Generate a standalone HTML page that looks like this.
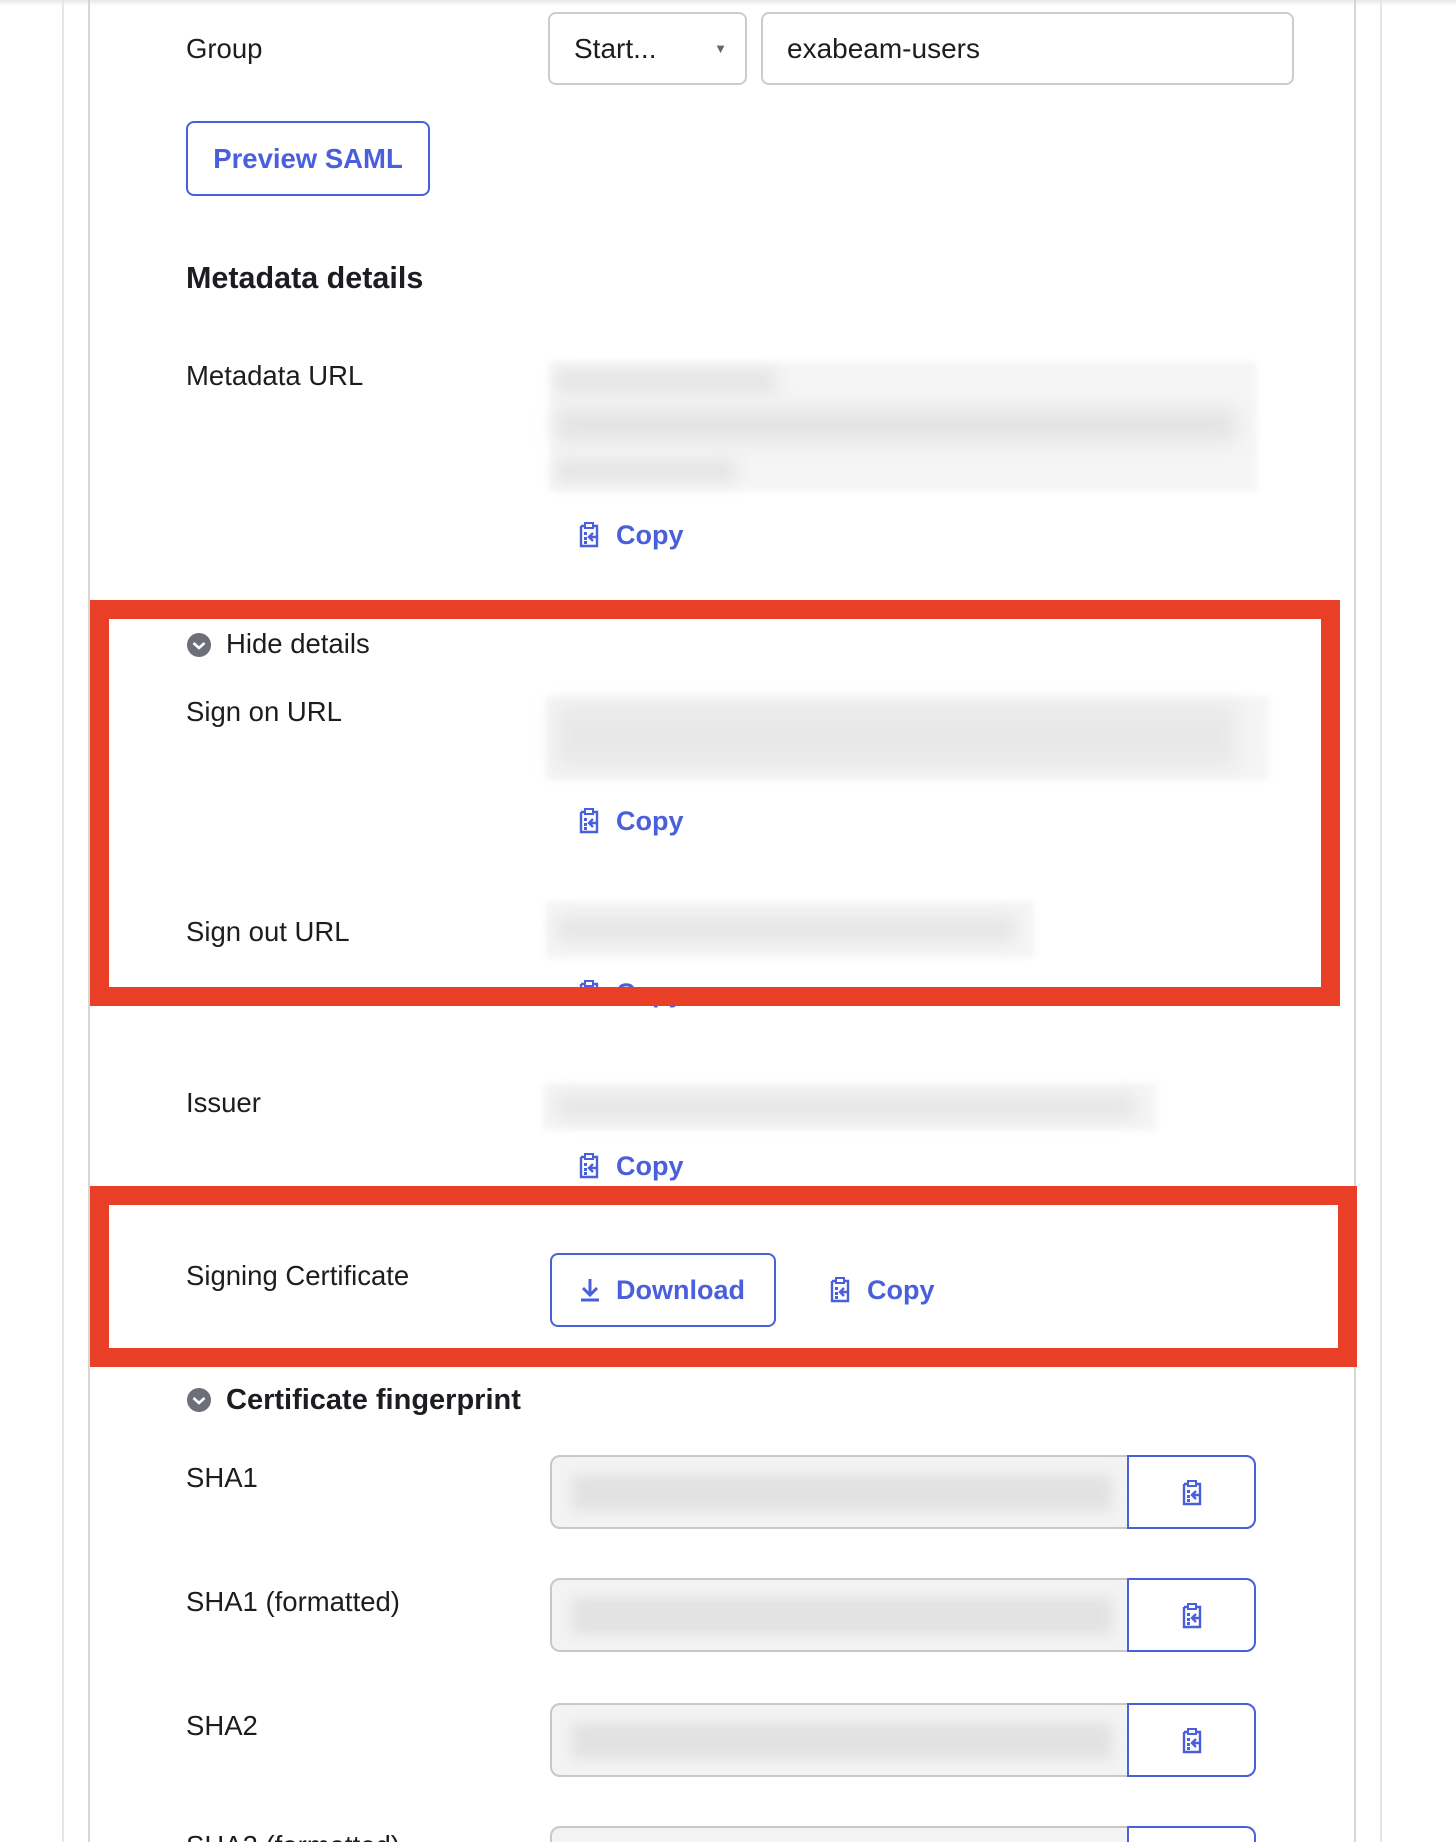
<!DOCTYPE html>
<html style="height:1842px;overflow:hidden"><head><meta charset="utf-8"><style>
body{margin:0;width:1456px;height:1842px;overflow:hidden;background:#fff;font-family:"Liberation Sans",sans-serif;color:#1d1d21;position:relative}
.a{position:absolute}
.lbl{position:absolute;left:186px;font-size:27.5px;line-height:30px}
.blue{color:#4a5fdb}
.blur{position:absolute;background:#f5f5f5;filter:blur(3px)}
.copy{position:absolute;font-size:27px;font-weight:bold;color:#4a5fdb;line-height:32px}
.copy svg{position:absolute;left:-39px;top:2px}
.red{position:absolute;border:19px solid #e83f26;box-sizing:border-box}
.field{position:absolute;left:550px;width:706px;height:74px;border:2px solid #c8c8c8;border-radius:10px;background:#f3f3f3;box-sizing:border-box}
.field .b{position:absolute;right:-2px;top:-2px;width:129px;height:74px;border:2px solid #4a5fdb;border-radius:0 10px 10px 0;background:#fff;box-sizing:border-box}
.field .g{position:absolute;left:20px;top:18px;width:540px;height:36px;background:#e2e2e2;filter:blur(6px)}
</style></head><body>
<svg width="0" height="0" style="position:absolute"><defs>
<symbol id="ci" viewBox="0 0 24 28"><path d="M4 5h4M16 5h4v20H4V5" fill="none" stroke="#4a5fdb" stroke-width="2.4"/><rect x="8" y="2" width="8" height="5" fill="none" stroke="#4a5fdb" stroke-width="2"/><rect x="7" y="11" width="3" height="3" fill="#4a5fdb"/><rect x="7" y="16" width="3" height="3" fill="#4a5fdb"/><rect x="7" y="20" width="3" height="3" fill="#4a5fdb"/><path d="M21 16h-8M16 12l-4 4 4 4" fill="none" stroke="#4a5fdb" stroke-width="2.4"/></symbol>
</defs></svg>
<div class="a" style="left:0;top:0;width:1456px;height:6px;background:linear-gradient(#e8e8e8,#fff)"></div>
<div class="a" style="left:62px;top:0;width:2px;height:1842px;background:#e6e6e6"></div>
<div class="a" style="left:88px;top:0;width:2px;height:1842px;background:#d6d6d6"></div>
<div class="a" style="left:1354px;top:0;width:2px;height:1842px;background:#d6d6d6"></div>
<div class="a" style="left:1380px;top:0;width:2px;height:1842px;background:#e6e6e6"></div>

<div class="lbl" style="top:34px">Group</div>
<div class="a" style="left:548px;top:12px;width:199px;height:73px;border:2px solid #ccc;border-radius:8px;box-sizing:border-box;font-size:28px;line-height:69px;padding-left:24px">Start...<span style="position:absolute;right:18px;top:0;font-size:13px;color:#666">▼</span></div>
<div class="a" style="left:761px;top:12px;width:533px;height:73px;border:2px solid #ccc;border-radius:8px;box-sizing:border-box;font-size:28px;line-height:69px;padding-left:24px">exabeam-users</div>
<div class="a" style="left:186px;top:121px;width:244px;height:75px;border:2px solid #4a5fdb;border-radius:8px;box-sizing:border-box;font-size:27.5px;font-weight:bold;line-height:71px;text-align:center" ><span class="blue">Preview SAML</span></div>
<div class="lbl" style="top:261px;font-size:30.5px;font-weight:bold;line-height:34px">Metadata details</div>
<div class="lbl" style="top:361px">Metadata URL</div>
<div class="blur" style="left:550px;top:362px;width:707px;height:129px"></div>
<div class="a" style="left:556px;top:370px;width:220px;height:22px;background:#e4e4e4;filter:blur(8px)"></div>
<div class="a" style="left:556px;top:410px;width:680px;height:30px;background:#e2e2e2;filter:blur(10px)"></div>
<div class="a" style="left:556px;top:460px;width:180px;height:22px;background:#e4e4e4;filter:blur(8px)"></div>
<div class="copy" style="left:616px;top:519px"><svg width="24" height="28"><use href="#ci"/></svg>Copy</div>

<div class="lbl" style="top:629px;left:226px">Hide details</div>
<svg class="a" style="left:186px;top:632px" width="26" height="26"><circle cx="13" cy="13" r="12" fill="#6e6e78"/><path d="M7.5 11l5.5 5 5.5-5" fill="none" stroke="#fff" stroke-width="2.6"/></svg>
<div class="lbl" style="top:697px">Sign on URL</div>
<div class="blur" style="left:546px;top:696px;width:723px;height:84px"></div>
<div class="a" style="left:556px;top:704px;width:680px;height:64px;background:#e8e8e8;filter:blur(10px)"></div>
<div class="copy" style="left:616px;top:805px"><svg width="24" height="28"><use href="#ci"/></svg>Copy</div>
<div class="lbl" style="top:917px">Sign out URL</div>
<div class="blur" style="left:546px;top:901px;width:488px;height:57px"></div>
<div class="a" style="left:556px;top:916px;width:460px;height:26px;background:#e6e6e6;filter:blur(8px)"></div>
<div class="copy" style="left:616px;top:977px"><svg width="24" height="28"><use href="#ci"/></svg>Copy</div>
<div class="red" style="left:90px;top:600px;width:1250px;height:406px"></div>

<div class="lbl" style="top:1088px">Issuer</div>
<div class="blur" style="left:543px;top:1083px;width:614px;height:47px"></div>
<div class="a" style="left:556px;top:1095px;width:580px;height:24px;background:#e6e6e6;filter:blur(8px)"></div>
<div class="copy" style="left:616px;top:1150px"><svg width="24" height="28"><use href="#ci"/></svg>Copy</div>

<div class="lbl" style="top:1261px">Signing Certificate</div>
<div class="a" style="left:550px;top:1253px;width:226px;height:74px;border:2px solid #4a5fdb;border-radius:8px;box-sizing:border-box"></div>
<svg class="a" style="left:578px;top:1277px" width="24" height="26"><path d="M12 2v16M5 11l7 7 7-7M3 23h18" fill="none" stroke="#4a5fdb" stroke-width="3"/></svg>
<div class="copy" style="left:616px;top:1274px">Download</div>
<div class="copy" style="left:867px;top:1274px"><svg width="24" height="28"><use href="#ci"/></svg>Copy</div>
<div class="red" style="left:90px;top:1186px;width:1267px;height:181px"></div>

<svg class="a" style="left:186px;top:1387px" width="26" height="26"><circle cx="13" cy="13" r="12" fill="#6e6e78"/><path d="M7.5 11l5.5 5 5.5-5" fill="none" stroke="#fff" stroke-width="2.6"/></svg>
<div class="lbl" style="top:1385px;left:226px;font-weight:bold;font-size:29px">Certificate fingerprint</div>

<div class="lbl" style="top:1463px">SHA1</div>
<div class="field" style="top:1455px"><div class="g"></div><div class="b"><svg style="position:absolute;left:51px;top:22px" width="24" height="28"><use href="#ci"/></svg></div></div>
<div class="lbl" style="top:1587px">SHA1 (formatted)</div>
<div class="field" style="top:1578px"><div class="g"></div><div class="b"><svg style="position:absolute;left:51px;top:22px" width="24" height="28"><use href="#ci"/></svg></div></div>
<div class="lbl" style="top:1711px">SHA2</div>
<div class="field" style="top:1703px"><div class="g"></div><div class="b"><svg style="position:absolute;left:51px;top:22px" width="24" height="28"><use href="#ci"/></svg></div></div>
<div class="lbl" style="top:1831px">SHA2 (formatted)</div>
<div class="field" style="top:1826px;height:16px;border-bottom:none;border-radius:10px 10px 0 0"><div class="b" style="height:18px;border-bottom:none;border-radius:0 10px 0 0"></div></div>
</body></html>
